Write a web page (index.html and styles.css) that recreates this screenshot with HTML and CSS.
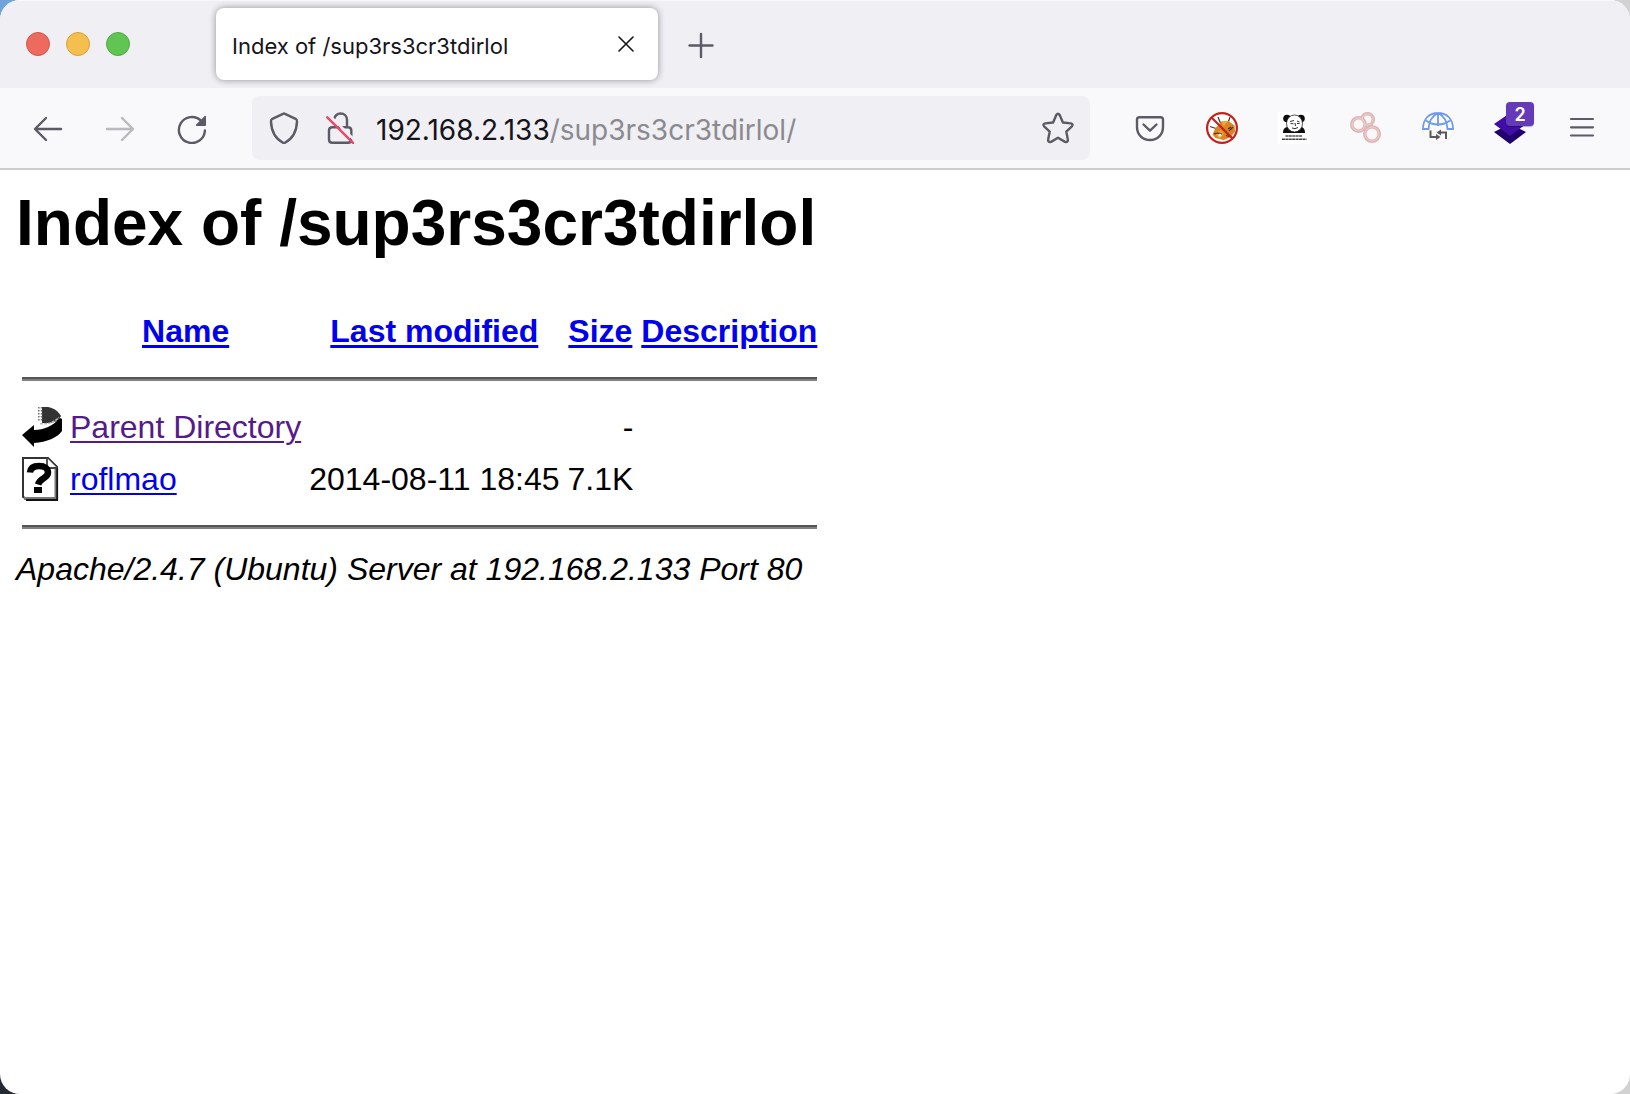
FILE: index.html
```html
<!DOCTYPE html>
<html lang="en">
<head>
<meta charset="utf-8">
<title>Index of /sup3rs3cr3tdirlol</title>
<link rel="stylesheet" href="styles.css">
</head>
<body>
<div class="window">
  <header class="chrome">
    <div class="tabbar">
      <div class="lights">
        <button class="light close" aria-label="Close window"></button>
        <button class="light minimize" aria-label="Minimize window"></button>
        <button class="light maximize" aria-label="Zoom window"></button>
      </div>
      <div class="tab">
        <button class="tab-title">Index of /sup3rs3cr3tdirlol</button>
        <button class="tab-close" aria-label="Close tab">
          <svg class="icon" viewBox="0 0 32 32"><path d="M9 9l14 14M23 9L9 23" fill="none" stroke="#15141a" stroke-width="1.600" stroke-linecap="round"/></svg>
        </button>
      </div>
      <button class="new-tab" aria-label="New tab">
        <svg class="icon" viewBox="0 0 32 32"><path d="M16 6v23M4.500 17.500h23" fill="none" stroke="#5b5b66" stroke-width="2.400" stroke-linecap="round"/></svg>
      </button>
    </div>
    <nav class="toolbar">
      <div class="buttons">
        <button class="tool" aria-label="Back">
          <svg class="icon" viewBox="0 0 32 32"><path d="M29 17H3.500M14 6L3 17l11 11" fill="none" stroke="#5b5b66" stroke-width="2.400" stroke-linecap="round" stroke-linejoin="round"/></svg>
        </button>
        <button class="tool" aria-label="Forward" disabled>
          <svg class="icon" viewBox="0 0 32 32"><path d="M3 17h25.500M18 6l11 11-11 11" fill="none" stroke="#5b5b66" stroke-width="2.400" stroke-linecap="round" stroke-linejoin="round"/></svg>
        </button>
        <button class="tool" aria-label="Reload">
          <svg class="icon" viewBox="0 0 32 32"><path d="M28.900 18.500A13 13 0 1 1 25 8.700" fill="none" stroke="#5b5b66" stroke-width="2.400" stroke-linecap="round"/><path d="M30 4.500V13a1 1 0 0 1-1 1h-8.500q-1.200-.4-.4-1.400l8.600-8.600q.9-.5 1.300.5z" fill="#5b5b66"/></svg>
        </button>
      </div>
      <div class="urlbar">
        <svg class="icon" viewBox="0 0 32 32"><path d="M15 1.800q1-.6 2 0l10.600 5q1.500.8 1.400 2.600c-.3 9.200-4 17-12 21.300q-1 .5-2 0C7 26.400 3.300 18.600 3 9.400q-.1-1.800 1.400-2.600z" fill="none" stroke="#5b5b66" stroke-width="2.400" stroke-linejoin="round"/></svg>
        <svg class="icon" viewBox="0 0 32 32"><path d="M10 7.200C11 3.500 13.500 1.500 16.500 1.500c3.900 0 6.500 2.900 6.500 6.500v7.200M5 27.500v-9q0-3.300 3.300-3.300H24q3.300 0 3.300 3.300v9q0 3.300-3.300 3.300H8.300Q5 30.800 5 27.500z" fill="none" stroke="#5b5b66" stroke-width="2.400" stroke-linecap="round"/><path d="M5.500 3.500L31.500 29" stroke="#f0eff4" stroke-width="2.600"/><path d="M3.300 5.300L29 30.800" stroke="#e8476a" stroke-width="2.400" stroke-linecap="round"/></svg>
        <div class="address"><label class="host" for="path">192.168.2.133</label><input class="path" id="path" type="text" value="/sup3rs3cr3tdirlol/" spellcheck="false"></div>
        <button class="bookmark" aria-label="Bookmark this page">
          <svg class="icon" viewBox="0 0 32 32"><path d="M14.300 3q1.700-2.600 3.400 0l3.200 7.500 7.900.9q2.800.7 1.100 2.900l-5.600 5.300 1.600 8.300q-.1 2.800-2.900 2L16 25.700l-7 4.200q-2.800.8-2.900-2l1.600-8.300-5.600-5.300Q.4 12.100 3.200 11.400l7.900-.9z" fill="none" stroke="#5b5b66" stroke-width="2.400" stroke-linejoin="round"/></svg>
        </button>
      </div>
      <div class="buttons">
        <button class="tool" aria-label="Save to Pocket">
          <svg class="icon" viewBox="0 0 32 32"><path d="M5.500 5.300h21q2.500 0 2.500 2.500V15c0 7.500-5.500 13-13 13S3 22.500 3 15V7.800q0-2.500 2.500-2.500z" fill="none" stroke="#5b5b66" stroke-width="2.400"/><path d="M9.500 12.500l6.500 6.200 6.500-6.200" fill="none" stroke="#5b5b66" stroke-width="2.400" stroke-linecap="round" stroke-linejoin="round"/></svg>
        </button>
        <button class="tool" aria-label="Fox blocker">
          <svg class="icon" viewBox="0 0 32 32"><circle cx="16" cy="16" r="15" fill="#fff"/><path d="M12 5l2.500 6M24 5l-2 6M4 14.500l6 2" stroke="#383530" stroke-width="1.200"/><path d="M6.500 22.500l3-6.500 6-6.500 7-.5 6 4.500.5 6-4.500 6-7 2.500-8-2z" fill="#dc8424"/><path d="M15.500 9.500l2 5 5-5.500zM9 21l6-3 3 4-5 5z" fill="#eda43c"/><path d="M8 22q4-2 8 .3M22 17l3-2M23 19l4-4M20 23.500l3 1" fill="none" stroke="#473322" stroke-width="1.200"/><circle cx="14" cy="23" r="1.500" fill="#f7eee1"/><path d="M5.500 5.500l21 21" stroke="#c4201c" stroke-width="2.200"/><circle cx="16" cy="16" r="14.900" fill="none" stroke="#c4201c" stroke-width="2.200"/></svg>
        </button>
        <button class="tool" aria-label="Panda">
          <svg class="icon" viewBox="0 0 32 32"><path fill="#fff" d="M0 0h32v32H0z"/><path d="M5 21c0-3.500 1-5 4-6h15c2 1 3 3 3 6z" fill="#0c0c0c"/><circle cx="9" cy="6.500" r="3.800" fill="#0c0c0c"/><circle cx="23" cy="6.500" r="3.800" fill="#0c0c0c"/><ellipse cx="16.500" cy="11.500" rx="8" ry="8.500" fill="#fff" stroke="#222" stroke-width=".8"/><path d="M12 9.500l4-1M19 9l2.500 1M12.500 11.500l3 .3M19 11.500h2.500M17 11l.5 3M14 16q3 1.500 6-.5" fill="none" stroke="#333" stroke-width="1"/><path d="M7.500 24h17" stroke="#555" stroke-width="1.400" stroke-dasharray="3 .4"/><path d="M4 27.300h24.500" stroke="#444" stroke-width="1.600" stroke-dasharray="3 .4"/></svg>
        </button>
        <button class="tool" aria-label="Bubbles">
          <svg class="icon" viewBox="0 0 32 32"><g fill="#fdf6f6" stroke="#dfb6b6" stroke-width="3.600"><circle cx="17.500" cy="7.500" r="5.800"/><circle cx="8.500" cy="12.500" r="6.700"/><circle cx="22" cy="22" r="7.300"/></g><g fill="none" stroke="#eccfcf" stroke-width="1"><circle cx="17.500" cy="7.500" r="5.500"/><circle cx="8.500" cy="12.500" r="6.500"/><circle cx="22" cy="22" r="7"/></g></svg>
        </button>
        <button class="tool" aria-label="Proxy switcher">
          <svg class="icon" viewBox="0 0 32 32"><circle cx="16" cy="16" r="15.500" fill="#fafafa" stroke="#f1f1f1" stroke-width="1"/><path d="M1 17C1 7 7 1 16 1s15 6 15 16h-5.500c-.3-7-3.500-13-9.500-16C10 4 6.800 10 6.500 17zM16 1v13M4 8.500c3 2.300 6.500 4 12 4s9-1.700 12-4" fill="none" stroke="#6f99ea" stroke-width="1.800"/><path d="M8.500 18.500v6.500h7M17 20.500h7V27" fill="none" stroke="#5a5a5a" stroke-width="2"/><path d="M14 22v6l4.500-3zM19 17.500v6l-4.500-3z" fill="#5a5a5a"/></svg>
        </button>
        <button class="tool" aria-label="Layers, 2 items">
          <svg class="icon" viewBox="0 0 32 32"><path d="M0 20l16-8 16 8-16 12z" fill="#20006c"/><path d="M0 12L16 1l16 11-16 12z" fill="#400da5"/></svg>
          <span class="badge">2</span>
        </button>
        <button class="tool" aria-label="Open application menu">
          <svg class="icon" viewBox="0 0 32 32"><path d="M5 7h22M5 15.300h22M5 23.500h22" stroke="#5b5b66" stroke-width="2.200" stroke-linecap="round"/></svg>
        </button>
      </div>
    </nav>
  </header>
  <main class="page">
    <h1 class="heading">Index of /sup3rs3cr3tdirlol</h1>
    <table class="listing">
      <thead>
        <tr class="entry">
          <th class="glyph"></th>
          <th><a href="?C=N;O=D">Name</a></th>
          <th><a href="?C=M;O=A">Last modified</a></th>
          <th><a href="?C=S;O=A">Size</a></th>
          <th><a href="?C=D;O=A">Description</a></th>
        </tr>
      </thead>
      <tbody>
        <tr><td colspan="5"><hr class="rule"></td></tr>
        <tr class="entry">
          <td class="glyph"><svg class="file-icon" viewBox="0 0 40 44" role="img" aria-label="Parent directory"><path d="M20 2h6c6 1 10 4 13 9l-3 5-8 2h-8z" fill="#333"/><path d="M16.800 2v15M19.500 2v14" stroke="#777" stroke-width="1.600" stroke-dasharray="1.500 1.500"/><path d="M18 18.500c8 1 14-1 19-6" fill="none" stroke="#bbb" stroke-width="1.500" stroke-dasharray="3 1"/><path d="M0 30l12-10v5c10 0 19-4 26-12l2 1v12c-5 7-15 11-28 12v4z" fill="#000"/></svg></td>
          <td><a class="visited" href="/">Parent Directory</a></td>
          <td></td>
          <td class="num">-</td>
          <td></td>
        </tr>
        <tr class="entry">
          <td class="glyph"><svg class="file-icon" viewBox="0 0 40 44" role="img" aria-label="Unknown file"><path d="M1 1h25l9 9v32H5l-4-2z" fill="#fff" stroke="#333" stroke-width="2"/><path d="M2 41.500h32V11" fill="none" stroke="#777" stroke-width="3"/><path d="M35.200 11v32M4 43h32" stroke="#111" stroke-width="1.800"/><path d="M25 1v10h10" fill="#fff" stroke="#444" stroke-width="1.800"/><path d="M8 15.500C8.500 10.500 12 9 17 9c6 0 9 2.500 9 6.500 0 6-8 5-10 12" fill="none" stroke="#000" stroke-width="6.500"/><path d="M12 30h8v6h-8z" fill="#000"/></svg></td>
          <td><a href="roflmao">roflmao</a></td>
          <td class="num">2014-08-11 18:45</td>
          <td class="num">7.1K</td>
          <td></td>
        </tr>
        <tr><td colspan="5"><hr class="rule"></td></tr>
      </tbody>
    </table>
    <address class="server">Apache/2.4.7 (Ubuntu) Server at 192.168.2.133 Port 80</address>
  </main>
</div>
</body>
</html>
```

FILE: styles.css
```css
* {
  box-sizing: border-box;
}

body {
  margin: 0;
  min-height: 100vh;
  background:
    linear-gradient(#6ea3dc, #6ea3dc) left top / 40px 40px no-repeat,
    linear-gradient(#232a33, #232a33) left bottom / 40px 40px no-repeat,
    #d2d2d2;
}

.window {
  display: flex;
  flex-direction: column;
  min-height: 100vh;
  overflow: hidden;
  border-radius: 20px;
  background: #fff;
}

button {
  display: flex;
  align-items: center;
  justify-content: center;
  margin: 0;
  padding: 0;
  border: 0;
  background: none;
  font: inherit;
  color: inherit;
}

.icon {
  display: block;
  flex: none;
  width: 32px;
  height: 32px;
}

.chrome {
  font-family: Inter, sans-serif;
  color: #15141a;
  border-bottom: 2px solid #cccccd;
}

.tabbar {
  display: flex;
  align-items: center;
  height: 88px;
  padding-left: 26px;
  background: #f0eff4;
  box-shadow: inset 0 1px #f8f8fa;
}

.lights {
  display: flex;
  gap: 16px;
  margin-right: 86px;
}

.light {
  width: 24px;
  height: 24px;
  border: 1px solid;
  border-radius: 50%;
}

.close {
  background: #ed6a5e;
  border-color: #d35549;
}

.minimize {
  background: #f5bf4f;
  border-color: #d8a13c;
}

.maximize {
  background: #61c554;
  border-color: #50a944;
}

.tab {
  display: flex;
  align-items: center;
  justify-content: space-between;
  width: 442px;
  height: 72px;
  padding: 0 16px;
  border-radius: 8px;
  background: #fff;
  box-shadow: 0 0 7px rgba(0, 0, 0, 0.4);
}

.tab-title {
  padding-top: 4px;
  font-size: 22px;
  line-height: 32px;
}

.new-tab {
  margin-left: 27px;
}

.toolbar {
  display: flex;
  align-items: center;
  gap: 28px;
  padding: 8px 16px;
  background: #f9f9fb;
}

.buttons {
  display: flex;
  gap: 8px;
}

.tool {
  position: relative;
  width: 64px;
  height: 64px;
}

.tool:disabled {
  opacity: 0.4;
}

.urlbar {
  display: flex;
  flex: 1;
  align-items: center;
  gap: 24px;
  min-width: 0;
  height: 64px;
  padding: 0 16px;
  border-radius: 8px;
  background: #f0eff4;
}

.address {
  display: flex;
  flex: 1;
  align-items: center;
  min-width: 0;
  margin-left: -4px;
  padding-top: 4px;
  font-size: 28px;
  line-height: 36px;
}

.path {
  flex: 1;
  min-width: 0;
  padding: 0;
  border: 0;
  outline: 0;
  background: none;
  font: inherit;
  color: #8a8a8f;
}

.badge {
  position: absolute;
  top: 6px;
  right: 8px;
  width: 28px;
  height: 24px;
  border-radius: 4px;
  background: #643ab8;
  box-shadow: 0 1px 1px rgba(0, 0, 0, 0.3);
  color: #fff;
  font-size: 18px;
  font-weight: 600;
  line-height: 26px;
  text-align: center;
}

.page {
  padding: 16px;
  font-family: "Liberation Sans", Arial, sans-serif;
  font-size: 32px;
  line-height: 36px;
  color: #000;
}

.heading {
  margin: 0 0 43px;
  font-size: 64px;
  line-height: 74px;
}

.listing {
  border-spacing: 4px;
}

.listing th,
.listing td {
  padding: 2px;
  white-space: nowrap;
}

.entry {
  height: 48px;
}

.glyph {
  width: 44px;
}

.file-icon {
  display: block;
  width: 40px;
  height: 44px;
}

.num {
  text-align: right;
}

.rule {
  height: 4px;
  margin: 16px 0;
  border: 0;
  border-top: 2px solid #555;
  background: #808080;
}

a {
  color: #0000ee;
  text-decoration-thickness: 2px;
  text-underline-offset: 3px;
}

th a {
  text-decoration-thickness: 3px;
}

.visited {
  color: #551a8b;
}

.server {
  font-style: italic;
}
```
